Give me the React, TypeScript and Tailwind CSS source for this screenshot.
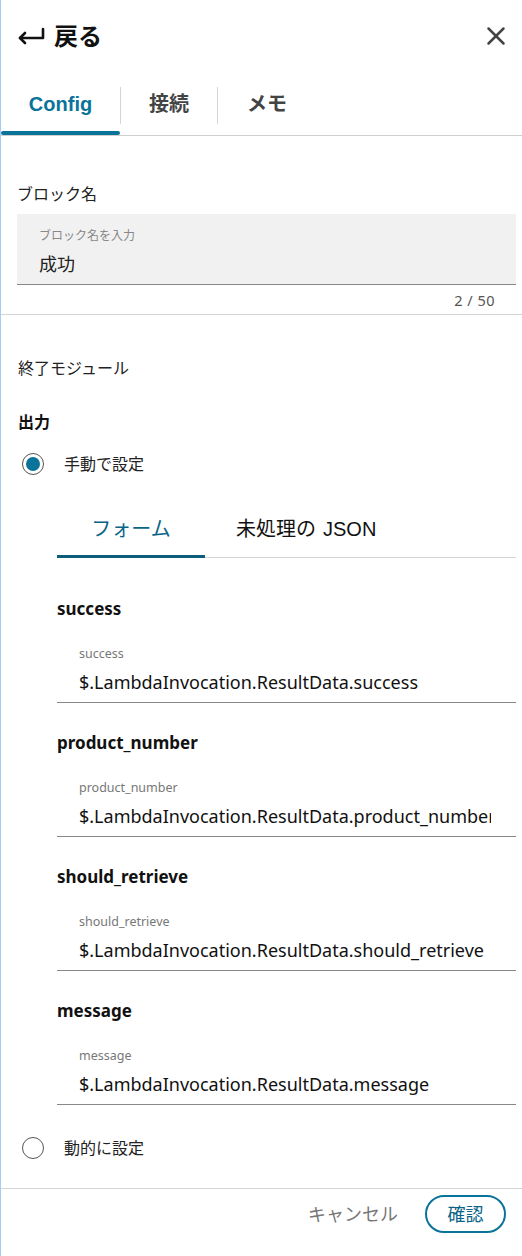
import React from 'react';
import { X } from 'lucide-react';

const fields = [
  { key: 'success', value: '$.LambdaInvocation.ResultData.success' },
  { key: 'product_number', value: '$.LambdaInvocation.ResultData.product_number' },
  { key: 'should_retrieve', value: '$.LambdaInvocation.ResultData.should_retrieve' },
  { key: 'message', value: '$.LambdaInvocation.ResultData.message' },
];

function Radio({ checked, label }: { checked: boolean; label: string }) {
  return (
    <div className="flex items-center gap-[20px] pl-[21px] h-[24px]">
      <span className="w-[22px] h-[22px] rounded-full border border-[#555] flex items-center justify-center shrink-0">
        {checked && <span className="w-[14px] h-[14px] rounded-full bg-[#0a7399]" />}
      </span>
      <span className="text-[16px] text-[#222] leading-[24px]">{label}</span>
    </div>
  );
}

export default function App() {
  return (
    <div
      className="w-[522px] h-[1256px] bg-white border-l border-[#a8cdf0] flex flex-col overflow-hidden"
      style={{ fontFamily: '"Noto Sans", "Noto Sans CJK JP", sans-serif' }}
    >
      {/* header */}
      <div className="flex items-center justify-between pl-[16px] pr-[11px] h-[72px]">
        <div className="flex items-center gap-[9px] text-[24px] font-semibold text-[#111]">
          <svg width="28" height="18" viewBox="0 0 28 18" fill="none" stroke="#111" strokeWidth="2.6" strokeLinecap="round" strokeLinejoin="round">
            <path d="M26 2v9H3" />
            <path d="M8 6l-5 5 5 5" />
          </svg>
          <span>戻る</span>
        </div>
        <X size={30} strokeWidth={2} className="text-[#444]" />
      </div>

      {/* tabs */}
      <div className="flex items-stretch h-[64px] border-b border-[#cfcfcf]" style={{ fontFamily: '"Liberation Sans", "Noto Sans CJK JP", sans-serif' }}>
        <div className="relative w-[119px] flex items-center justify-center text-[20px] font-bold text-[#0a7399]">
          Config
          <span className="absolute left-0 right-0 bottom-0 h-[4px] rounded-full bg-[#0a7399]" />
        </div>
        <div className="w-px bg-[#d5d5d5] mt-[15px] mb-[11px]" />
        <div className="w-[96px] flex items-center justify-center text-[20px] font-bold text-[#444]">接続</div>
        <div className="w-px bg-[#d5d5d5] mt-[15px] mb-[11px]" />
        <div className="w-[98px] flex items-center justify-center text-[20px] font-bold text-[#444]">メモ</div>
      </div>

      {/* block name */}
      <div className="pl-[16px] pr-[6px] pt-[46px] pb-[4px] border-b border-[#d5d5d5]">
        <div className="text-[16px] text-[#222] leading-[24px] mb-[8px]">ブロック名</div>
        <div className="bg-[#f1f1f1] border-b border-[#888] h-[71px] px-[22px] pt-[13px]">
          <div className="text-[12px] text-[#888] leading-[18px]">ブロック名を入力</div>
          <div className="text-[18px] text-[#222] mt-[7px] leading-[24px]">成功</div>
        </div>
        <div className="text-right text-[14.5px] tracking-[0.5px] text-[#555] leading-[20px] pr-[21px] mt-[5px]">2 / 50</div>
      </div>

      {/* module */}
      <div className="pl-[17px] pt-[41px] text-[16px] leading-[24px] text-[#222]">終了モジュール</div>
      <div className="pl-[17px] pt-[30px] text-[16px] leading-[24px] font-bold text-[#111]">出力</div>
      <div className="pt-[18px]">
        <Radio checked label="手動で設定" />
      </div>

      {/* sub tabs */}
      <div className="ml-[56px] mr-[6px] mt-[39px] flex border-b border-[#d5d5d5] h-[43px]">
        <div className="relative w-[148px] flex justify-center text-[20px] leading-[28px] text-[#0a6487]">
          フォーム
          <span className="absolute left-0 right-0 bottom-[-1px] h-[3px] bg-[#0b5d7a]" />
        </div>
        <div className="pl-[31px] flex text-[20px] leading-[28px] text-[#111]">
          <span>未処理の</span>
          <span className="ml-[7px]" style={{ fontFamily: '"Liberation Sans", sans-serif' }}>JSON</span>
        </div>
      </div>

      {/* fields */}
      <div className="flex flex-col gap-[29px] pt-[40px] pl-[56px] pr-[6px]">
        {fields.map((f) => (
          <div key={f.key}>
            <div className="text-[17px] font-bold text-[#111] leading-[22px]">{f.key}</div>
            <div className="border-b border-[#888] pl-[22px] pr-[25px] pt-[25px] pb-[7px]">
              <div className="text-[12.5px] text-[#777] leading-[18px]">{f.key}</div>
              <div className="text-[18px] text-[#111] leading-[26px] mt-[6px] whitespace-nowrap overflow-hidden">{f.value}</div>
            </div>
          </div>
        ))}
      </div>

      <div className="pt-[31px]">
        <Radio checked={false} label="動的に設定" />
      </div>

      {/* footer */}
      <div className="mt-[28px] border-t border-[#d5d5d5] flex items-center justify-end gap-[27px] pr-[16px] pt-[6px]">
        <span className="text-[18px] text-[#777]">キャンセル</span>
        <span className="w-[81px] h-[38px] rounded-full border-2 border-[#0a7399] flex items-center justify-center text-[18px] text-[#0a6487]">確認</span>
      </div>
    </div>
  );
}
